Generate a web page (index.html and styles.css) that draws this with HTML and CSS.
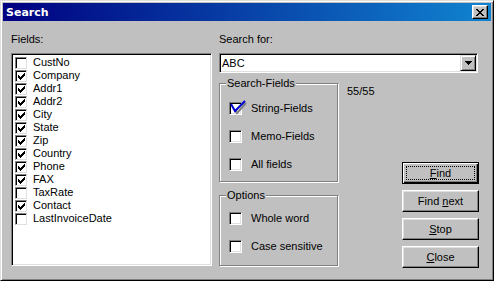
FILE: index.html
```html
<!DOCTYPE html>
<html lang="en">

<head>
  <meta charset="UTF-8">
  <title>Search</title>
  <link rel="stylesheet" href="styles.css">
</head>

<body>
  <div class="window">
    <div class="titlebar">
      <span class="title">Search</span>
      <button class="close">
        <svg width="8" height="7" viewBox="0 0 8 7"><path d="M0 0h2v1h-2zM6 0h2v1h-2zM1 1h2v1h-2zM5 1h2v1h-2zM2 2h4v1h-4zM3 3h2v1h-2zM2 4h4v1h-4zM1 5h2v1h-2zM5 5h2v1h-2zM0 6h2v1h-2zM6 6h2v1h-2z" fill="#000"/></svg>
      </button>
    </div>

    <div class="dialog">
      <div class="fields">
        <div class="label">Fields:</div>
        <ul class="field-list">
          <li><span class="lbox"></span>CustNo</li>
          <li><span class="lbox"><svg class="tick" viewBox="0 0 7 7"><path d="M0 2h1v1h1v1h1v-1h1v-1h1v-1h1v-1h1v3h-1v1h-1v1h-1v1h-1v1h-1v-1h-1v-1h-1z"/></svg></span>Company</li>
          <li><span class="lbox"><svg class="tick" viewBox="0 0 7 7"><path d="M0 2h1v1h1v1h1v-1h1v-1h1v-1h1v-1h1v3h-1v1h-1v1h-1v1h-1v1h-1v-1h-1v-1h-1z"/></svg></span>Addr1</li>
          <li><span class="lbox"><svg class="tick" viewBox="0 0 7 7"><path d="M0 2h1v1h1v1h1v-1h1v-1h1v-1h1v-1h1v3h-1v1h-1v1h-1v1h-1v1h-1v-1h-1v-1h-1z"/></svg></span>Addr2</li>
          <li><span class="lbox"><svg class="tick" viewBox="0 0 7 7"><path d="M0 2h1v1h1v1h1v-1h1v-1h1v-1h1v-1h1v3h-1v1h-1v1h-1v1h-1v1h-1v-1h-1v-1h-1z"/></svg></span>City</li>
          <li><span class="lbox"><svg class="tick" viewBox="0 0 7 7"><path d="M0 2h1v1h1v1h1v-1h1v-1h1v-1h1v-1h1v3h-1v1h-1v1h-1v1h-1v1h-1v-1h-1v-1h-1z"/></svg></span>State</li>
          <li><span class="lbox"><svg class="tick" viewBox="0 0 7 7"><path d="M0 2h1v1h1v1h1v-1h1v-1h1v-1h1v-1h1v3h-1v1h-1v1h-1v1h-1v1h-1v-1h-1v-1h-1z"/></svg></span>Zip</li>
          <li><span class="lbox"><svg class="tick" viewBox="0 0 7 7"><path d="M0 2h1v1h1v1h1v-1h1v-1h1v-1h1v-1h1v3h-1v1h-1v1h-1v1h-1v1h-1v-1h-1v-1h-1z"/></svg></span>Country</li>
          <li><span class="lbox"><svg class="tick" viewBox="0 0 7 7"><path d="M0 2h1v1h1v1h1v-1h1v-1h1v-1h1v-1h1v3h-1v1h-1v1h-1v1h-1v1h-1v-1h-1v-1h-1z"/></svg></span>Phone</li>
          <li><span class="lbox"><svg class="tick" viewBox="0 0 7 7"><path d="M0 2h1v1h1v1h1v-1h1v-1h1v-1h1v-1h1v3h-1v1h-1v1h-1v1h-1v1h-1v-1h-1v-1h-1z"/></svg></span>FAX</li>
          <li><span class="lbox"></span>TaxRate</li>
          <li><span class="lbox"><svg class="tick" viewBox="0 0 7 7"><path d="M0 2h1v1h1v1h1v-1h1v-1h1v-1h1v-1h1v3h-1v1h-1v1h-1v1h-1v1h-1v-1h-1v-1h-1z"/></svg></span>Contact</li>
          <li><span class="lbox"></span>LastInvoiceDate</li>
        </ul>
      </div>

      <div class="search">
        <div class="label">Search for:</div>
        <div class="combo">
          <span class="value">ABC</span>
          <span class="drop">
            <svg width="7" height="4" viewBox="0 0 7 4"><path d="M0 0h7v1h-1v1h-1v1h-1v1h-1v-1h-1v-1h-1v-1h-1z" fill="#000"/></svg>
          </span>
        </div>

        <div class="lower">
          <div class="groups">
            <fieldset class="group search-fields">
              <legend>Search-Fields</legend>
              <div class="opt-row">
                <span class="cb">
                  <svg class="odd-tick" width="13" height="13" viewBox="0 0 13 13">
                    <polyline points="6,8 8,11 17,1" fill="none" stroke="#808080" stroke-width="2"/>
                    <polyline points="2,2 6,9 16,-1" fill="none" stroke="#0000d0" stroke-width="2"/>
                  </svg>
                </span>String-Fields
              </div>
              <div class="opt-row"><span class="cb"></span>Memo-Fields</div>
              <div class="opt-row"><span class="cb"></span>All fields</div>
            </fieldset>
            <fieldset class="group options">
              <legend>Options</legend>
              <div class="opt-row"><span class="cb"></span>Whole word</div>
              <div class="opt-row"><span class="cb"></span>Case sensitive</div>
            </fieldset>
          </div>

          <div class="count">55/55</div>

          <div class="buttons">
            <button class="btn default"><span class="focus"><u>F</u>ind</span></button>
            <button class="btn">Find <u>n</u>ext</button>
            <button class="btn"><u>S</u>top</button>
            <button class="btn"><u>C</u>lose</button>
          </div>
        </div>
      </div>
    </div>
  </div>
</body>

</html>
```

FILE: styles.css
```css
body {
  margin: 0;
  font-family: "Liberation Sans", Arial, sans-serif;
  font-size: 11px;
  color: #000;
}

.window {
  width: 494px;
  height: 281px;
  box-sizing: border-box;
  background: #c0c0c0;
  border: 1px solid;
  border-color: #dfdfdf #000 #000 #dfdfdf;
  box-shadow: inset 1px 1px #fff, inset -1px -1px #808080;
  padding: 2px;
}

.titlebar {
  height: 18px;
  background: linear-gradient(to right, #000080, #1084d0);
  display: flex;
  align-items: center;
  justify-content: space-between;
  padding: 0 3px 0 3px;
  color: #fff;
}

.title {
  font-family: "DejaVu Sans", sans-serif;
  font-weight: bold;
  font-size: 11px;
}

.close {
  width: 16px;
  height: 14px;
  box-sizing: border-box;
  padding: 0;
  border: 1px solid;
  border-color: #fff #000 #000 #fff;
  box-shadow: inset -1px -1px #808080, inset 1px 1px #dfdfdf;
  background: #c0c0c0;
  display: flex;
  align-items: center;
  justify-content: center;
}

.dialog {
  display: flex;
  gap: 7px;
  padding: 12px 0 0 8px;
}

.label {
  height: 13px;
  line-height: 13px;
  margin-bottom: 7px;
}

.field-list {
  width: 201px;
  height: 213px;
  box-sizing: border-box;
  margin: 0;
  padding: 2px 0 0 3px;
  list-style: none;
  background: #fff;
  border: 1px solid;
  border-color: #808080 #fff #fff #808080;
  box-shadow: inset 1px 1px #000, inset -1px -1px #dfdfdf;
}

.field-list li {
  display: flex;
  align-items: center;
  height: 13px;
  line-height: 13px;
}

.lbox {
  width: 12px;
  height: 12px;
  box-sizing: border-box;
  border: 1px solid;
  border-color: #808080 #dfdfdf #dfdfdf #808080;
  box-shadow: inset 1px 1px #000;
  background: #fff;
  margin-right: 6px;
  display: flex;
  align-items: center;
  justify-content: center;
}

.tick {
  width: 7px;
  height: 7px;
  margin: 1px 0 0 1px;
  fill: #000;
}

.search {
  width: 260px;
}

.combo {
  display: flex;
  align-items: center;
  box-sizing: border-box;
  width: 259px;
  height: 20px;
  background: #fff;
  border: 1px solid;
  border-color: #808080 #fff #fff #808080;
  box-shadow: inset 1px 1px #000, inset -1px -1px #dfdfdf;
  padding: 1px 1px 1px 2px;
}

.value {
  flex: 1;
}

.drop {
  width: 16px;
  height: 16px;
  box-sizing: border-box;
  border: 1px solid;
  border-color: #dfdfdf #000 #000 #dfdfdf;
  box-shadow: inset 1px 1px #fff, inset -1px -1px #808080;
  background: #c0c0c0;
  display: flex;
  align-items: center;
  justify-content: center;
}

.lower {
  display: flex;
  margin-top: 4px;
}

.groups {
  display: flex;
  flex-direction: column;
  gap: 7px;
}

.group {
  width: 119px;
  box-sizing: border-box;
  margin: 0;
  border: 1px solid #808080;
  box-shadow: inset 1px 1px #fff, 1px 1px #fff;
  padding: 12px 9px 10px 9px;
}

.group.options {
  padding: 10px 9px 12px 9px;
}

.group legend {
  padding: 0 1px;
  margin-left: -3px;
  line-height: 13px;
  background: #c0c0c0;
}

.opt-row {
  display: flex;
  align-items: center;
  height: 13px;
  line-height: 13px;
}

.opt-row + .opt-row {
  margin-top: 15px;
}

.cb {
  position: relative;
  width: 13px;
  height: 13px;
  box-sizing: border-box;
  border: 1px solid;
  border-color: #808080 #fff #fff #808080;
  box-shadow: inset 1px 1px #000, inset -1px -1px #dfdfdf;
  background: #fff;
  margin-right: 9px;
}

.odd-tick {
  position: absolute;
  left: -1px;
  top: -1px;
  overflow: visible;
}

.count {
  margin: 8px 0 0 9px;
  line-height: 13px;
}

.buttons {
  margin-left: auto;
  margin-top: 85px;
  display: flex;
  flex-direction: column;
  gap: 6px;
}

.btn {
  width: 77px;
  height: 22px;
  box-sizing: border-box;
  border: 1px solid;
  border-color: #fff #000 #000 #fff;
  box-shadow: inset -1px -1px #808080, inset 1px 1px #dfdfdf;
  background: #c0c0c0;
  font: inherit;
  color: #000;
  padding: 0;
}

.btn.default {
  border-color: #000;
  box-shadow: inset 1px 1px #fff, inset -1px -1px #000, inset -2px -2px #808080;
  padding: 3px 3px 3px 3px;
}

.focus {
  display: block;
  height: 100%;
  box-sizing: border-box;
  border: 1px dotted #000;
  line-height: 12px;
}
```
